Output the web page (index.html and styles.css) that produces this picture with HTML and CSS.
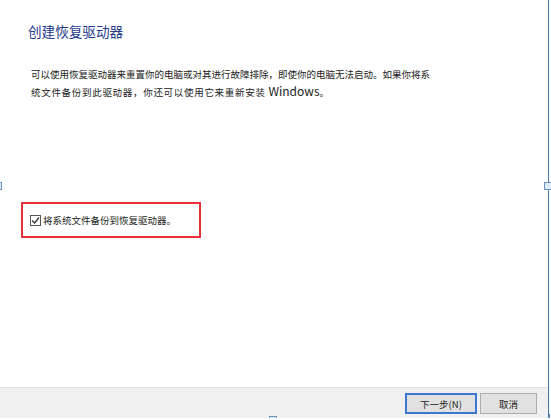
FILE: index.html
```html
<!DOCTYPE html>
<html lang="zh-CN">

<head>
    <meta charset="UTF-8">
    <meta name="viewport" content="width=device-width, initial-scale=1.0">
    <title>创建恢复驱动器</title>
    <link rel="stylesheet" href="styles.css">
</head>

<body>

    <div class="window">
        <div class="content">
            <h1 class="title">创建恢复驱动器</h1>

            <p class="desc">可以使用恢复驱动器来重置你的电脑或对其进行故障排除，即使你的电脑无法启动。如果你将系<br><span class="wide">统文件备份到此驱动器，你还可以使用它来重新安装 </span><span class="latin">Windows</span>。</p>

            <div class="option-box">
                <label class="option">
                    <span class="checkbox">
                        <svg width="9" height="9" viewBox="0 0 9 9">
                            <path d="M1 4.5 L3.5 7 L8 1.5" fill="none" stroke="#333" stroke-width="1.3"/>
                        </svg>
                    </span>
                    将系统文件备份到恢复驱动器。
                </label>
            </div>
        </div>

        <div class="footer">
            <button class="btn btn-primary">下一步(N)</button>
            <button class="btn">取消</button>
        </div>

        <!-- resize handles on the frame -->
        <span class="handle handle-left"></span>
        <span class="handle handle-right"></span>
        <span class="handle handle-bottom"></span>
        <span class="corner"></span>
    </div>

</body>

</html>
```

FILE: styles.css
```css
body {
    margin: 0;
    background-color: white;
    font-family: "Noto Sans CJK SC", "Noto Sans", sans-serif;
    color: #222;
}

.window {
    position: relative;
    width: 548px;
    height: 418px;
    border-right: 1px solid #4a78a6;
    display: flex;
    flex-direction: column;
}

.content {
    height: 387px;
    padding: 24px 0 0 28px;
    box-sizing: border-box;
}

.title {
    margin: 0;
    font-size: 13.6px;
    line-height: 14px;
    font-weight: normal;
    color: #26398c;
}

.desc {
    margin: 28px 0 0 3px;
    font-size: 9.5px;
    line-height: 17.5px;
    color: #222;
}

.wide {
    letter-spacing: 0.7px;
}

.latin {
    font-size: 12px;
    line-height: 1;
}

.option-box {
    margin: 101px 0 0 -7px;
    width: 169px;
    height: 32px;
    border: 2px solid #e8323a;
    display: flex;
    align-items: center;
    padding-left: 7px;
    box-sizing: content-box;
}

.option {
    display: flex;
    align-items: center;
    font-size: 9.5px;
    line-height: 12px;
    color: #222;
}

.checkbox {
    width: 9px;
    height: 9px;
    border: 1px solid #555;
    background-color: white;
    display: flex;
    align-items: center;
    justify-content: center;
    margin-right: 2px;
}

.footer {
    flex: 1;
    background-color: #f0f0f0;
    border-top: 1px solid #dfdfdf;
    display: flex;
    justify-content: flex-end;
    align-items: flex-start;
    padding: 5px 11px 0 0;
    gap: 3px;
}

.btn {
    height: 21px;
    width: 57px;
    padding: 0;
    font-family: inherit;
    font-size: 9.5px;
    color: #222;
    background-color: #e1e1e1;
    border: 1px solid #adadad;
}

.btn-primary {
    width: 72px;
    border: 2px solid #3a78cf;
}

.handle {
    position: absolute;
    background-color: #dcecf8;
    border: 1px solid #6b93bb;
    box-sizing: border-box;
}

.handle-left {
    left: -1px;
    top: 182px;
    width: 3px;
    height: 8px;
}

.handle-right {
    left: 544px;
    top: 182px;
    width: 8px;
    height: 8px;
}

.handle-bottom {
    left: 269px;
    top: 416px;
    width: 8px;
    height: 8px;
}

.corner {
    position: absolute;
    left: 543px;
    top: 414px;
    width: 6px;
    height: 6px;
    border-right: 1px solid #4a78a6;
    border-bottom: 1px solid #4a78a6;
    border-bottom-right-radius: 5px;
}
```
